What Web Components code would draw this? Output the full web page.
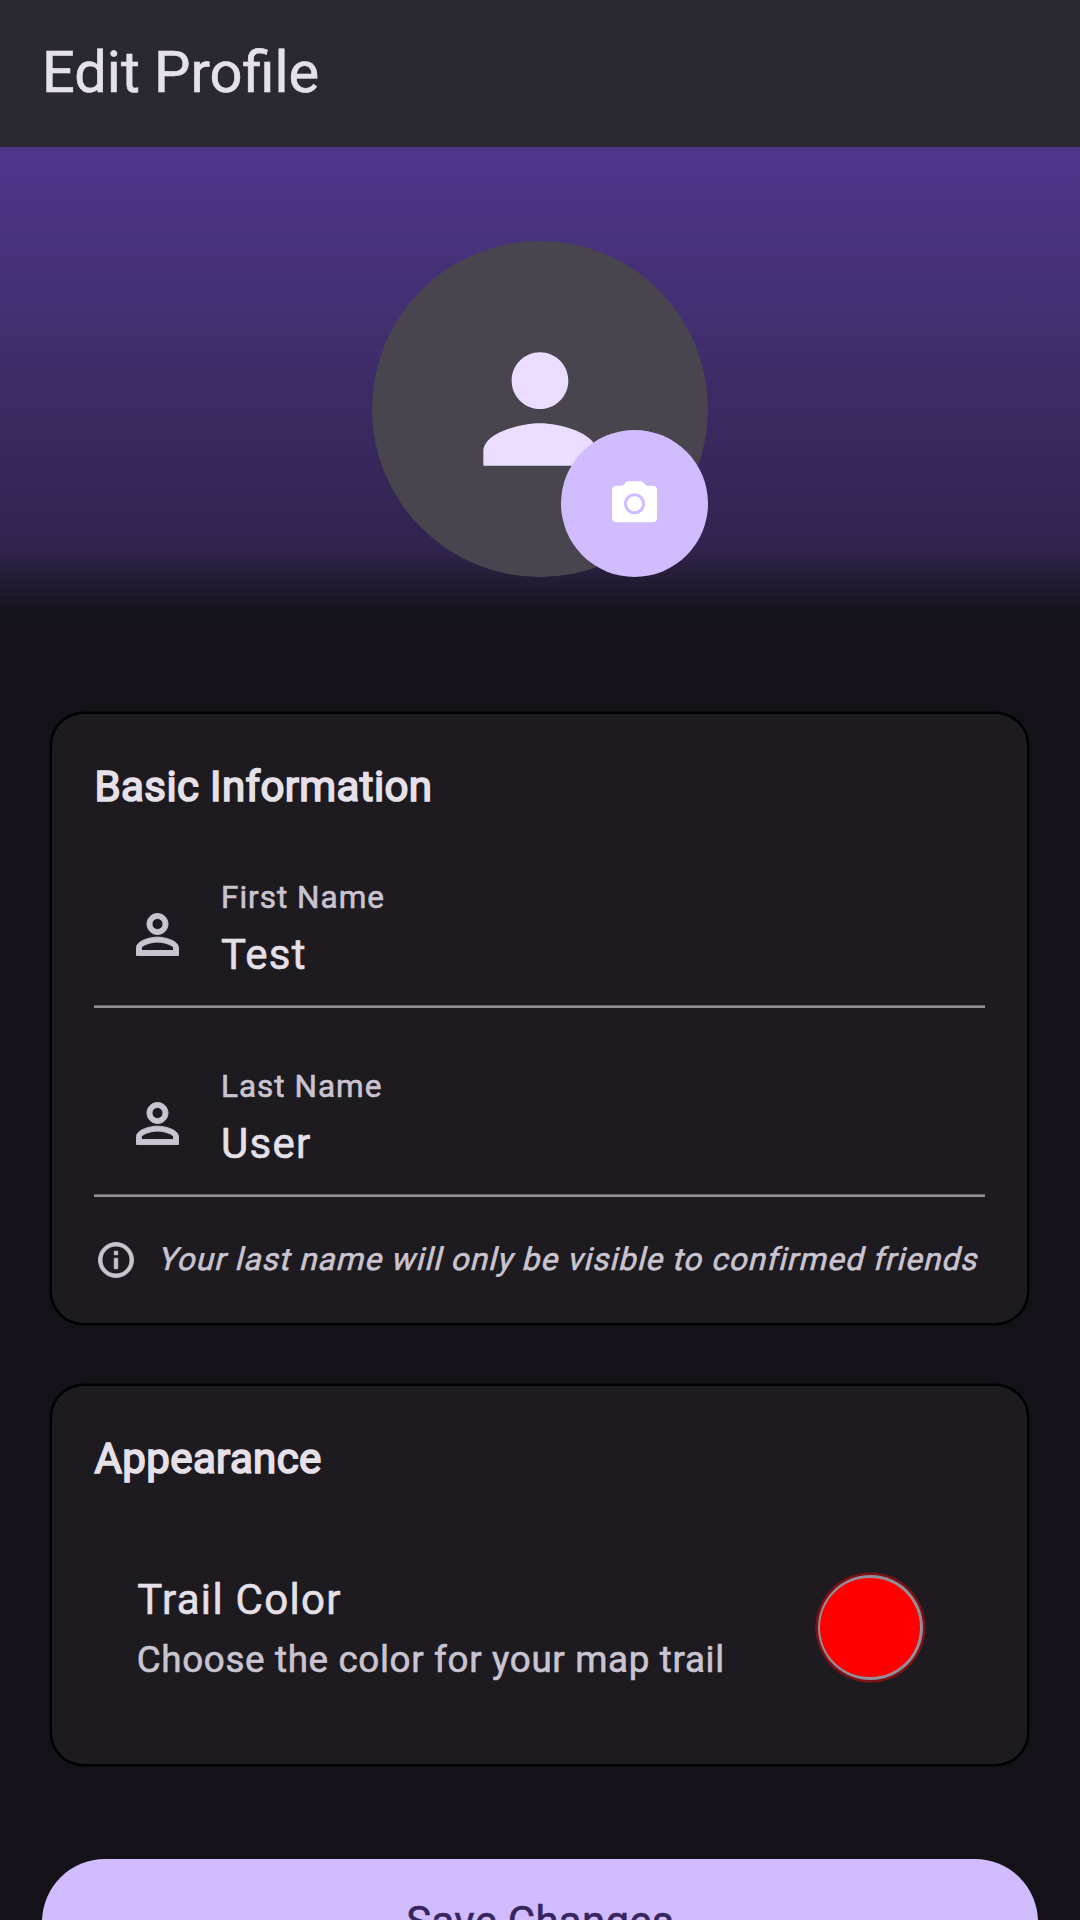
<!DOCTYPE html>
<html lang="en">
<head>
<meta charset="utf-8">
<title>Edit Profile</title>
<style>
  html, body { margin: 0; height: 1920px; overflow: hidden; background: #141218; }
  body { font-family: Roboto, "Liberation Sans", sans-serif; color: #e6e0e9; -webkit-text-stroke: .6px currentColor; }
</style>
</head>
<body>
<profile-page>
  <app-bar slot="bar">Edit Profile</app-bar>
  <profile-header slot="header"></profile-header>
  <info-card heading="Basic Information">
    <text-field label="First Name">Test</text-field>
    <text-field label="Last Name">User</text-field>
    <info-note>Your last name will only be visible to confirmed friends</info-note>
  </info-card>
  <info-card heading="Appearance">
    <color-tile heading="Trail Color" color="#ff0000">Choose the color for your map trail</color-tile>
  </info-card>
  <save-button slot="action">Save Changes</save-button>
</profile-page>

<script>
  const define = (name, render) => customElements.define(name, class extends HTMLElement {
    connectedCallback() {
      if (this.shadowRoot) return;
      this.attachShadow({ mode: "open" }).innerHTML = render(this);
    }
  });

  define("profile-page", () => `
    <style>
      :host { display: flex; flex-direction: column; width: 1080px; height: 1920px; overflow: hidden; }
      main { display: flex; flex-direction: column; gap: 63px; padding: 94.4px 52.8px 94.7px 52.2px; flex: none; }
      footer { padding: 0 42px; flex: none; }
    </style>
    <slot name="bar"></slot>
    <slot name="header"></slot>
    <main><slot></slot></main>
    <footer><slot name="action"></slot></footer>`);

  define("app-bar", () => `
    <style>
      :host { display: flex; align-items: center; flex: none; box-sizing: border-box; height: 147px;
              padding: 0 42px 2px; background: #2b2930; font-size: 57.75px; line-height: 73.5px; }
    </style>
    <slot></slot>`);

  define("profile-header", () => `
    <style>
      :host { display: flex; justify-content: center; flex: none; box-sizing: border-box; height: 472.5px; padding-top: 94.4px;
              background: linear-gradient(to top, #141218, #14121800 68px), linear-gradient(#4f378b, #2b2043); }
      .avatar { position: relative; display: grid; place-items: center; width: 336px; height: 336px; border-radius: 50%; background: #49454f; }
      .camera { position: absolute; right: 0; bottom: 0; display: grid; place-items: center; width: 147px; height: 147px;
                border-radius: 50%; background: #d0bcff; }
      svg { display: block; }
    </style>
    <div class="avatar">
      <svg width="170" height="170" viewBox="0 0 24 24" fill="#eaddff"><path d="M12 12c2.21 0 4-1.79 4-4s-1.79-4-4-4-4 1.79-4 4 1.79 4 4 4zm0 2c-2.67 0-8 1.34-8 4v2h16v-2c0-2.66-5.33-4-8-4z"/></svg>
      <div class="camera">
        <svg width="54" height="54" viewBox="0 0 24 24" fill="#fff"><g transform="translate(-.2 -.1)"><circle cx="12" cy="12" r="3.35"/><path fill-rule="evenodd" d="M9.1 1.95Q8.6 1.95 8.2 2.4L7.2 3.55Q6.8 3.95 6.2 3.95H4Q2 3.95 2 5.95V18.2Q2 20.2 4 20.2H20Q22 20.2 22 18.2V5.95Q22 3.95 20 3.95H17.8Q17.2 3.95 16.8 3.55L15.8 2.4Q15.4 1.95 14.9 1.95ZM12 7.3A4.7 4.7 0 1 1 12 16.7A4.7 4.7 0 1 1 12 7.3Z"/></g></svg>
      </div>
    </div>`);

  define("info-card", el => `
    <style>
      :host { display: flex; flex-direction: column; gap: 42px; padding: 42px; border-radius: 31.5px; background: #1d1b20;
              box-shadow: 0 0 0 2.4px #000; }
      h2 { margin: -1px 0 1px; padding-left: .4px; font-size: 42px; line-height: 63px; font-weight: 400; letter-spacing: .37px;
           -webkit-text-stroke: 1.7px currentColor; }
    </style>
    <h2>${el.getAttribute("heading")}</h2>
    <slot></slot>`);

  define("text-field", el => `
    <style>
      :host { display: flex; flex-direction: column; height: 147px; }
      .row { display: flex; flex: 1; }
      svg { width: 63px; height: 63px; margin: 42px 32.2px 0 31.6px; fill: #cac4d0; stroke: #cac4d0; stroke-width: .36px; }
      .text { display: flex; flex-direction: column; gap: 10px; padding-top: 21px; }
      label { font-size: 31.5px; line-height: 31.5px; letter-spacing: 1px; color: #cac4d0; }
      .value { font-size: 42px; line-height: 63px; letter-spacing: 1.3px; }
      .line { height: 2px; border-top: 1px solid #65626a; background: #938f99; }
    </style>
    <div class="row">
      <svg viewBox="0 0 24 24"><path d="M12 5.9c1.16 0 2.1.94 2.1 2.1s-.94 2.1-2.1 2.1S9.9 9.16 9.9 8s.94-2.1 2.1-2.1m0 9c2.97 0 6.1 1.46 6.1 2.1v1.1H5.9V17c0-.64 3.13-2.1 6.1-2.1M12 4C9.79 4 8 5.79 8 8s1.79 4 4 4 4-1.79 4-4-1.79-4-4-4zm0 9c-2.67 0-8 1.34-8 4v3h16v-3c0-2.66-5.33-4-8-4z"/></svg>
      <div class="text"><label>${el.getAttribute("label")}</label><div class="value"><slot></slot></div></div>
    </div>
    <div class="line"></div>`);

  define("info-note", () => `
    <style>
      :host { display: flex; align-items: center; gap: 20.9px; height: 42px; color: #cac4d0; font-size: 31.5px; line-height: 42px;
              letter-spacing: 1.05px; white-space: nowrap; }
      svg { width: 42px; height: 42px; margin-left: .4px; flex: none; fill: #cac4d0; stroke: #cac4d0; stroke-width: .5px; }
      /* slanted upright letterforms, sheared about the baseline */
      span { display: block; padding-top: 1px; transform: skewX(-14deg); transform-origin: 0 33px; }
    </style>
    <svg viewBox="0 0 24 24"><path d="M11 7h2v2h-2zm0 4h2v6h-2zm1-9C6.48 2 2 6.48 2 12s4.48 10 10 10 10-4.48 10-10S17.52 2 12 2zm0 18c-4.41 0-8-3.59-8-8s3.59-8 8-8 8 3.59 8 8-3.59 8-8 8z"/></svg>
    <span><slot></slot></span>`);

  define("color-tile", el => `
    <style>
      :host { display: flex; align-items: center; justify-content: space-between; height: 189px; padding: 0 62.7px 0 42.5px; white-space: nowrap; }
      .title { font-size: 42px; line-height: 63px; letter-spacing: 1.3px; padding-left: .5px; margin-top: -1px; }
      .sub { margin-top: 3px; font-size: 36.75px; line-height: 52.5px; letter-spacing: .66px; color: #cac4d0; }
      .swatch { box-sizing: border-box; width: 105px; height: 105px; border-radius: 50%; background: #938f99;
                box-shadow: 0 0 0 2.6px #7a1216; display: grid; place-items: center; }
      .swatch i { width: 99.75px; height: 99.75px; border-radius: 50%; background: ${el.getAttribute("color")}; }
    </style>
    <div><div class="title">${el.getAttribute("heading")}</div><div class="sub"><slot></slot></div></div>
    <div class="swatch"><i></i></div>`);

  define("save-button", () => `
    <style>
      :host { display: flex; align-items: center; justify-content: center; height: 126px; border-radius: 63px;
              background: #d0bcff; color: #38255f; font-size: 42px; line-height: 63px; letter-spacing: .26px; }
    </style>
    <slot></slot>`);
</script>
</body>
</html>
